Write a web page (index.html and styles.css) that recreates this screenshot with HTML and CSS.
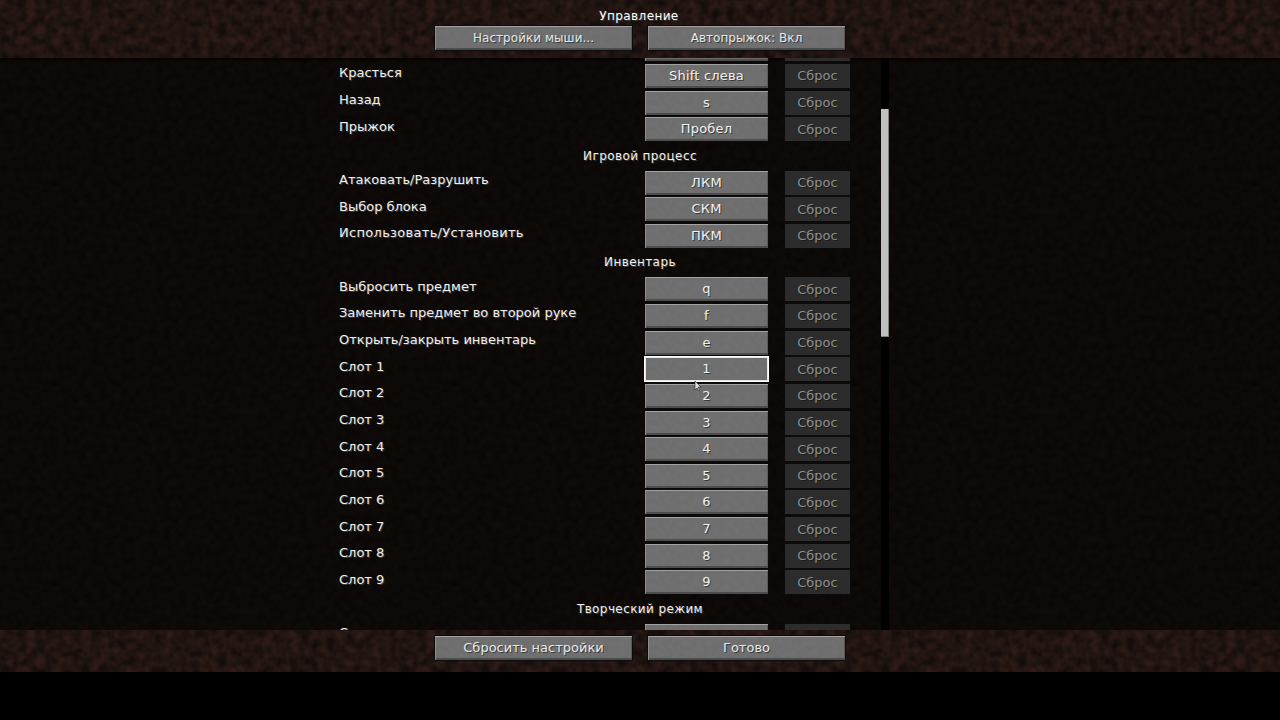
FILE: index.html
```html
<!DOCTYPE html>
<html lang="ru">
<head>
<meta charset="utf-8">
<title>Управление</title>
<link rel="stylesheet" href="styles.css">
</head>
<body>
<div class="screen">
  <header class="bar top">
    <div class="title">Управление</div>
    <div class="btn-row">
      <div class="btn wide small">Настройки мыши...</div>
      <div class="btn wide small">Автопрыжок: Вкл</div>
    </div>
  </header>
  <main class="list">
    <div class="rows">
      <div class="row"><span class="label"></span><div class="btn key"></div><div class="reset"></div></div>
      <div class="row"><span class="label">Красться</span><div class="btn key">Shift слева</div><div class="reset">Сброс</div></div>
      <div class="row"><span class="label">Назад</span><div class="btn key">s</div><div class="reset">Сброс</div></div>
      <div class="row"><span class="label">Прыжок</span><div class="btn key">Пробел</div><div class="reset">Сброс</div></div>
      <div class="cat">Игровой процесс</div>
      <div class="row"><span class="label">Атаковать/Разрушить</span><div class="btn key">ЛКМ</div><div class="reset">Сброс</div></div>
      <div class="row"><span class="label">Выбор блока</span><div class="btn key">СКМ</div><div class="reset">Сброс</div></div>
      <div class="row"><span class="label spaced">Использовать/Установить</span><div class="btn key">ПКМ</div><div class="reset">Сброс</div></div>
      <div class="cat">Инвентарь</div>
      <div class="row"><span class="label">Выбросить предмет</span><div class="btn key">q</div><div class="reset">Сброс</div></div>
      <div class="row"><span class="label">Заменить предмет во второй руке</span><div class="btn key">f</div><div class="reset">Сброс</div></div>
      <div class="row"><span class="label">Открыть/закрыть инвентарь</span><div class="btn key">e</div><div class="reset">Сброс</div></div>
      <div class="row"><span class="label">Слот 1</span><div class="btn key focus">1</div><div class="reset">Сброс</div></div>
      <div class="row"><span class="label">Слот 2</span><div class="btn key">2</div><div class="reset">Сброс</div></div>
      <div class="row"><span class="label">Слот 3</span><div class="btn key">3</div><div class="reset">Сброс</div></div>
      <div class="row"><span class="label">Слот 4</span><div class="btn key">4</div><div class="reset">Сброс</div></div>
      <div class="row"><span class="label">Слот 5</span><div class="btn key">5</div><div class="reset">Сброс</div></div>
      <div class="row"><span class="label">Слот 6</span><div class="btn key">6</div><div class="reset">Сброс</div></div>
      <div class="row"><span class="label">Слот 7</span><div class="btn key">7</div><div class="reset">Сброс</div></div>
      <div class="row"><span class="label">Слот 8</span><div class="btn key">8</div><div class="reset">Сброс</div></div>
      <div class="row"><span class="label">Слот 9</span><div class="btn key">9</div><div class="reset">Сброс</div></div>
      <div class="cat">Творческий режим</div>
      <div class="row"><span class="label">Сохранить</span><div class="btn key"></div><div class="reset"></div></div>
    </div>
    <div class="track"><div class="thumb"></div></div>
  </main>
  <footer class="bar bottom">
    <div class="btn-row">
      <div class="btn wide">Сбросить настройки</div>
      <div class="btn wide">Готово</div>
    </div>
  </footer>
  <svg class="cursor" width="8" height="12" viewBox="0 0 8 12"><path d="M1 1v9l2-2 2 3 1-1-2-3h3z" fill="#ddd" stroke="#222" stroke-width=".6"/></svg>
</div>
</body>
</html>
```
FILE: styles.css
```css
* { box-sizing: border-box; }
html, body { margin: 0; background: #000; }
.screen {
  position: relative;
  width: 1280px;
  height: 720px;
  overflow: hidden;
  font-family: "DejaVu Sans", sans-serif;
  font-size: 13px;
  color: #fff;
  text-shadow: 1px 1px 0 #3a3a3a;
  background: #000;
}
.bar {
  background-color: #2a1d19;
  background-image: url("data:image/svg+xml,%3Csvg xmlns='http://www.w3.org/2000/svg' width='400' height='200'%3E%3Cfilter id='n' color-interpolation-filters='sRGB' x='0' y='0' width='100%25' height='100%25'%3E%3CfeTurbulence type='fractalNoise' baseFrequency='.11' numOctaves='2' seed='4' stitchTiles='stitch'/%3E%3CfeColorMatrix values='.19 0 0 0 .035 .1 0 0 0 .03 .085 0 0 0 .025 0 0 0 0 1'/%3E%3C/filter%3E%3Crect width='400' height='200' filter='url(%23n)'/%3E%3C/svg%3E");
}
.top { height: 58px; padding-top: 8px; }
.bottom { height: 42px; padding-top: 6px; }
.title { height: 17px; line-height: 16px; text-align: center; font-size: 12px; letter-spacing: .4px; padding-right: 2px; }
.btn-row { display: flex; justify-content: center; gap: 16px; }
.top .btn-row { margin-top: 1px; }
.btn {
  display: flex;
  align-items: center;
  justify-content: center;
  height: 24px;
  padding-bottom: 1px;
  background-color: #6f6f6f;
  background-image: url("data:image/svg+xml,%3Csvg xmlns='http://www.w3.org/2000/svg' width='200' height='60'%3E%3Cfilter id='n' color-interpolation-filters='sRGB' x='0' y='0' width='100%25' height='100%25'%3E%3CfeTurbulence type='fractalNoise' baseFrequency='.2' numOctaves='2' seed='2' stitchTiles='stitch'/%3E%3CfeColorMatrix values='.03 0 0 0 .42 .03 0 0 0 .42 .03 0 0 0 .42 0 0 0 0 1'/%3E%3C/filter%3E%3Crect width='200' height='60' filter='url(%23n)'/%3E%3C/svg%3E");
  outline: 1px solid #0b0b0b;
  box-shadow: inset 0 1px 0 #a2a2a2, inset 1px 0 0 #8c8c8c, inset 0 -2px 0 #4c4c4c, inset -1px 0 0 #5a5a5a;
}
.wide { width: 197px; color: #e8e8e8; }
.small { font-size: 12px; letter-spacing: .05px; }
.list {
  position: relative;
  height: 572px;
  overflow: hidden;
  background-color: #110c0a;
  background-image: linear-gradient(#000a, #0000 5px), url("data:image/svg+xml,%3Csvg xmlns='http://www.w3.org/2000/svg' width='400' height='200'%3E%3Cfilter id='n' color-interpolation-filters='sRGB' x='0' y='0' width='100%25' height='100%25'%3E%3CfeTurbulence type='fractalNoise' baseFrequency='.14' numOctaves='2' seed='9' stitchTiles='stitch'/%3E%3CfeColorMatrix values='.05 0 0 0 .025 .035 0 0 0 .018 .03 0 0 0 .014 0 0 0 0 1'/%3E%3C/filter%3E%3Crect width='400' height='200' filter='url(%23n)'/%3E%3C/svg%3E");
}
.rows { width: 850px; padding-left: 339px; margin-top: -22px; }
.row { display: flex; align-items: center; height: 26.67px; }
.label { flex: 1; padding-bottom: 5px; line-height: 16px; color: #f0f0f0; }
.spaced { letter-spacing: .3px; }
.key { width: 123px; color: #f2f2f2; letter-spacing: .2px; }
.focus { outline-color: #fff; box-shadow: inset 0 0 0 1px #e8e8e8; background-color: #7c7c7c; }
.reset {
  display: flex;
  align-items: center;
  justify-content: center;
  width: 65px;
  height: 24px;
  margin-left: 17px;
  background: #2c2c2c;
  outline: 1px solid #0b0b0b;
  color: #8f8f8f;
  text-shadow: 1px 1px 0 #1a1a1a;
}
.cat { height: 26.67px; line-height: 26px; text-align: center; width: 1280px; margin-left: -339px; font-size: 12px; letter-spacing: .4px; color: #f0f0f0; }
.track { position: absolute; left: 881px; top: 0; bottom: 0; width: 8px; background: #000; }
.thumb { position: absolute; left: 0; top: 51px; width: 8px; height: 228px; background: #c0c0c0; box-shadow: inset -1px -1px 0 #808080; }
.cursor { position: absolute; left: 694px; top: 380px; }
```
